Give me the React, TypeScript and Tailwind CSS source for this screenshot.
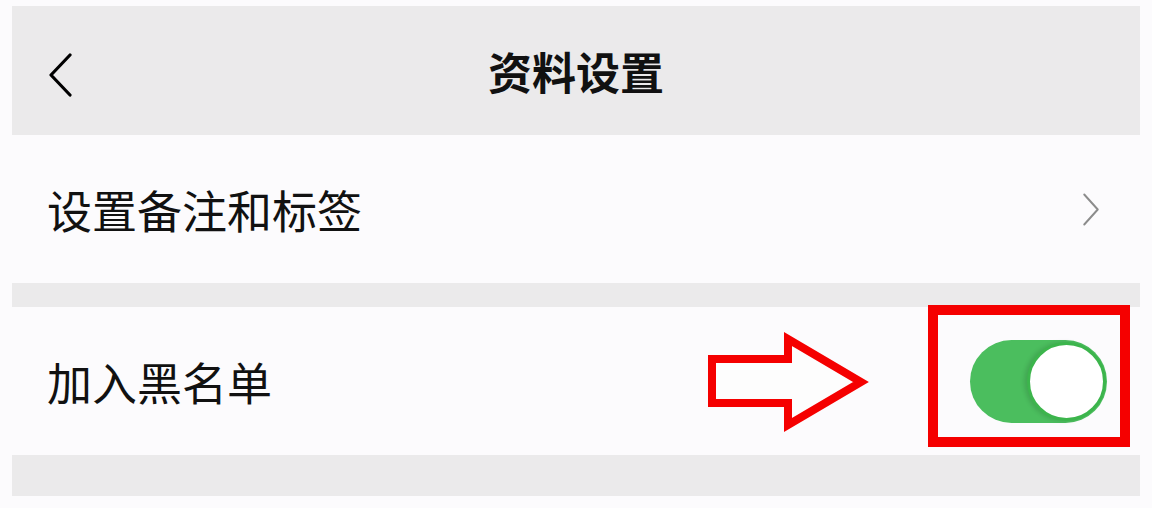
import { useState } from 'react';

const font = { fontFamily: '"Noto Sans CJK SC", "Noto Sans", sans-serif' };

const Chevron = ({ dir, className }: { dir: 'left' | 'right'; className?: string }) => (
  <svg viewBox="0 0 24 44" className={className} fill="none">
    {dir === 'left' ? (
      <path d="M22 2 L3 22 L22 42" stroke="currentColor" strokeWidth="3.2" strokeLinecap="round" strokeLinejoin="round" />
    ) : (
      <path d="M3 2 L21 22 L3 42" stroke="currentColor" strokeWidth="2.6" strokeLinecap="round" strokeLinejoin="round" />
    )}
  </svg>
);

const Toggle = ({ on }: { on: boolean }) => (
  <div className="flex h-[83px] w-[137px] items-center justify-end rounded-full bg-[#4bbe5e] pr-[1px]">
    <div className="h-[79px] w-[79px] rounded-full border-[3px] border-[#3cb54c] bg-white shadow-[-3px_0_4px_rgba(0,0,0,0.12)]" />
  </div>
);

export default function App() {
  const [blocked] = useState(true);

  return (
    <div className="h-[508px] w-full bg-[#fcfbfd] px-[12px] pt-[6px] text-[#111]" style={font}>
      <div className="w-[1128px]">
        {/* header */}
        <div className="relative flex h-[129px] items-center justify-center bg-[#ebeaeb]">
          <Chevron dir="left" className="absolute left-[36px] top-[47px] h-[44px] w-[24px] text-black" />
          <span className="text-[44px] font-bold leading-none">资料设置</span>
        </div>

        {/* remark row */}
        <div className="flex h-[148px] items-center justify-between bg-[#fcfbfd] pl-[35px] pr-[40px]">
          <span className="text-[45px] leading-none">设置备注和标签</span>
          <Chevron dir="right" className="h-[33px] w-[18px] text-[#8c8c8c]" />
        </div>

        <div className="h-[24px] bg-[#ebeaeb]" />

        {/* blacklist row */}
        <div className="relative flex h-[148px] items-center justify-between bg-[#fcfbfd] pl-[35px] pr-[33px]">
          <span className="text-[45px] leading-none">加入黑名单</span>
          <div className="relative z-10">
            <Toggle on={blocked} />
          </div>

          {/* annotation: arrow */}
          <svg viewBox="0 0 1128 148" className="pointer-events-none absolute inset-0 h-full w-full" fill="none">
            <polygon
              points="700,52 776,52 776,32 849,75 776,118 776,96 700,96"
              stroke="#f50000"
              strokeWidth="8"
              strokeLinejoin="miter"
              fill="#fdfdfd"
            />
          </svg>

          {/* annotation: highlight box */}
          <div className="pointer-events-none absolute left-[916px] top-[-2px] h-[142px] w-[202px] border-[10px] border-[#f50000]" />
        </div>

        <div className="h-[41px] bg-[#ebeaeb]" />
      </div>
    </div>
  );
}
